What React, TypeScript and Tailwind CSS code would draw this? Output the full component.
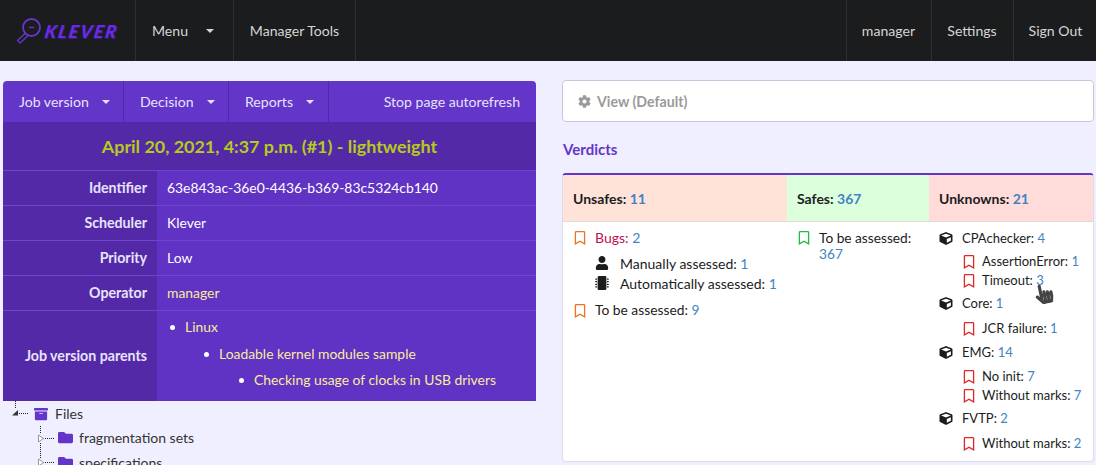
import { FaArchive, FaCog, FaCube, FaFolder, FaHandPointer, FaMicrochip, FaRegBookmark, FaUser } from 'react-icons/fa';

const Caret = ({ className = 'ml-[13px]' }: { className?: string }) => (
  <span className={`${className} inline-block w-0 h-0 border-x-[4px] border-x-transparent border-t-[4px] border-t-current`} />
);

const Num = ({ children }: { children: React.ReactNode }) => (
  <span className="text-[#4183c4]">{children}</span>
);

const Mark = ({ color }: { color: string }) => (
  <span className={`w-[14px] shrink-0 flex justify-start ${color}`}>
    <FaRegBookmark size={14} />
  </span>
);

const InfoRow = ({ label, children, h = 'h-[35px]' }: { label: string; children: React.ReactNode; h?: string }) => (
  <div className={`flex ${h} border-b border-b-[#6f45cc] last:border-b-0`}>
    <div className="w-[154px] shrink-0 bg-[#5429a8] flex items-center justify-end pr-[10px] font-bold text-[#e6e3fb] text-[14.2px]">
      {label}
    </div>
    <div className="flex-1 flex items-center pl-[10px] text-[13.9px] text-white">{children}</div>
  </div>
);

const Sub = ({ children }: { children: React.ReactNode }) => (
  <div className="flex items-center h-[19px] pl-[23px]">
    <Mark color="text-[#db2828]" />
    <span className="ml-[6px]">{children}</span>
  </div>
);

const Comp = ({ name, n }: { name: string; n: number }) => (
  <div className="flex items-center h-[19px]">
    <FaCube size={13} className="text-[#1b1c1d] w-[14px] shrink-0" />
    <span className="ml-[9px]">
      {name}: <Num>{n}</Num>
    </span>
  </div>
);

const Parent = ({ pad, children }: { pad: string; children: React.ReactNode }) => (
  <li className={`flex items-center h-[26.5px] ${pad}`}>
    <span className="w-[5px] h-[5px] rounded-full bg-white mr-[10px]" />
    {children}
  </li>
);

const App = () => {
  return (
    <div className="h-[465px] w-[1096px] overflow-hidden bg-[#f0efff] font-['Lato','Liberation_Sans',sans-serif] text-[14px] text-[#1b1c1d]">
      <header className="h-[61px] flex bg-[#1b1c1d] text-[#d5d5d6] text-[14.1px]">
        <div className="w-[136px] flex items-center pl-[16px] border-r border-r-[#2f3031]">
          <svg width="26" height="28" viewBox="0 0 26 28" fill="none" className="shrink-0">
            <circle cx="15.500" cy="10.500" r="8.500" stroke="#6435c9" strokeWidth="1.800" />
            <path d="M13 10.500h5" stroke="#6435c9" strokeWidth="1.400" />
            <path d="M9.500 16 1.500 23.500l2.500 2.500 8-7.500" stroke="#6435c9" strokeWidth="1.400" strokeLinejoin="round" />
          </svg>
          <span className="ml-[3px] inline-block -skew-x-[10deg] text-[#6a2be2] italic font-black text-[18px] tracking-[1.800px] leading-none [text-shadow:1px_1px_0_#3a1a80]">
            KLEVER
          </span>
        </div>
        <div className="w-[98px] flex items-center pl-[16px] border-r border-r-[#2f3031]">
          Menu
          <Caret className="ml-[18px]" />
        </div>
        <div className="w-[122px] flex items-center justify-center border-r border-r-[#2f3031]">Manager Tools</div>
        <div className="flex-1" />
        <div className="w-[85px] flex items-center justify-center pr-px border-l border-l-[#2f3031]">manager</div>
        <div className="w-[82px] flex items-center justify-center pr-px border-l border-l-[#2f3031]">Settings</div>
        <div className="w-[83px] flex items-center justify-center pl-px border-l border-l-[#2f3031]">Sign Out</div>
      </header>

      <main className="flex pt-[20px] pl-[3px]">
        <section className="w-[533px] shrink-0">
          <div className="rounded-t-[4px] bg-[#6435c9] text-[#e6e3fb] h-[41px] flex text-[14.1px]">
            <div className="w-[121px] flex items-center pl-[16px] border-r border-r-[#5429a8]">
              Job version
              <Caret />
            </div>
            <div className="w-[105px] flex items-center pl-[16px] border-r border-r-[#5429a8]">
              Decision
              <Caret />
            </div>
            <div className="w-[100px] flex items-center pl-[16px] border-r border-r-[#5429a8]">
              Reports
              <Caret />
            </div>
            <div className="flex-1 flex items-center justify-end pr-[16px]">Stop page autorefresh</div>
          </div>
          <div className="h-[49px] bg-[#5429a8] flex items-center justify-center font-bold text-[17.9px] text-[#b5cc18] border-b border-b-[#6f45cc]">
            April 20, 2021, 4:37 p.m. (#1) - lightweight
          </div>
          <div className="bg-[#6033c4]">
            <InfoRow label="Identifier">63e843ac-36e0-4436-b369-83c5324cb140</InfoRow>
            <InfoRow label="Scheduler">Klever</InfoRow>
            <InfoRow label="Priority">Low</InfoRow>
            <InfoRow label="Operator">
              <span className="text-[#fbeb9a]">manager</span>
            </InfoRow>
            <InfoRow label="Job version parents" h="h-[90px]">
              <ul className="text-[#fbeb9a] -mt-[4px]">
                <Parent pad="pl-[3px]">Linux</Parent>
                <Parent pad="pl-[37px]">Loadable kernel modules sample</Parent>
                <Parent pad="pl-[72px]">Checking usage of clocks in USB drivers</Parent>
              </ul>
            </InfoRow>
          </div>
          <div className="text-[#333]">
            <div className="flex items-center h-[25px] pl-[6px]">
              <svg width="24" height="25" viewBox="0 0 24 25" className="shrink-0">
                <path d="M6.500 0v8M8 12.500h11" stroke="#222" strokeDasharray="1 1" />
                <path d="M3 14.500h6V9z" fill="#333" />
              </svg>
              <FaArchive size={14} className="text-[#6435c9] ml-[1px]" />
              <span className="ml-[7px]">Files</span>
            </div>
            <div className="flex items-center h-[23px] pl-[31px]">
              <svg width="22" height="23" viewBox="0 0 22 23" className="shrink-0">
                <path d="M6.500 0v8M9 12.500h12M6.500 17v6" stroke="#222" strokeDasharray="1 1" />
                <path d="M4.500 9v7l5-3.500z" fill="#fff" stroke="#999" />
              </svg>
              <FaFolder size={15} className="text-[#6435c9] ml-[2px]" />
              <span className="ml-[6px]">fragmentation sets</span>
            </div>
            <div className="flex items-center h-[26px] pl-[31px]">
              <svg width="22" height="26" viewBox="0 0 22 26" className="shrink-0">
                <path d="M6.500 0v9M9 13.500h12" stroke="#222" strokeDasharray="1 1" />
                <path d="M4.500 10v7l5-3.500z" fill="#fff" stroke="#999" />
              </svg>
              <FaFolder size={15} className="text-[#6435c9] ml-[2px]" />
              <span className="ml-[6px]">specifications</span>
            </div>
          </div>
        </section>

        <section className="w-[532px] ml-[26px] shrink-0">
          <div className="h-[42px] -mt-px bg-white rounded-[4px] border border-[#c9c6d8] flex items-center pl-[15px] pt-px font-bold text-[#9a9a9a]">
            <FaCog size={13} />
            <span className="ml-[6px] text-[14.2px]">View (Default)</span>
          </div>
          <h3 className="mt-[18px] pl-px font-bold text-[15px] leading-[18px] text-[#6435c9]">Verdicts</h3>
          <div className="relative mt-[15px] h-[289px] bg-white rounded-[4px] border border-[#dcdbe8] border-t-2 border-t-[#6435c9] overflow-hidden flex flex-col">
            <div className="flex h-[47px] font-bold border-b border-b-[#e5d9d5] shrink-0">
              <div className="w-[224px] bg-[#ffe3d9] flex items-center pl-[10px]">
                Unsafes:&nbsp;<Num>11</Num>
              </div>
              <div className="w-[142px] bg-[#dcffdc] flex items-center pl-[10px]">
                Safes:&nbsp;<Num>367</Num>
              </div>
              <div className="flex-1 bg-[#ffdbd9] flex items-center pl-[10px]">
                Unknowns:&nbsp;<Num>21</Num>
              </div>
            </div>
            <div className="flex flex-1">
              <div className="w-[224px] pl-[10px] pt-[6px]">
                <div className="flex items-center h-[19px]">
                  <Mark color="text-[#f2711c]" />
                  <span className="ml-[8px] text-[#c00f55]">
                    Bugs: <Num>2</Num>
                  </span>
                </div>
                <div className="flex items-center h-[20px] mt-[6px] pl-[21px]">
                  <FaUser size={14} className="text-[#1b1c1d] w-[16px]" />
                  <span className="ml-[10px]">
                    Manually assessed: <Num>1</Num>
                  </span>
                </div>
                <div className="flex items-center h-[20px] pl-[21px]">
                  <FaMicrochip size={14} className="text-[#1b1c1d] w-[16px]" />
                  <span className="ml-[10px]">
                    Automatically assessed: <Num>1</Num>
                  </span>
                </div>
                <div className="flex items-center h-[19px] mt-[8px]">
                  <Mark color="text-[#f2711c]" />
                  <span className="ml-[8px] text-[13.8px]">
                    To be assessed: <Num>9</Num>
                  </span>
                </div>
              </div>
              <div className="w-[142px] pl-[10px] pt-[7px] flex items-start">
                <div className="mt-[2px]">
                  <Mark color="text-[#21ba45]" />
                </div>
                <span className="ml-[8px] w-[100px] leading-[16px] pt-[1px] text-[13.7px]">
                  To be assessed: <Num>367</Num>
                </span>
              </div>
              <div className="flex-1 pl-[10px] pt-[7px] relative text-[13px]">
                <Comp name="CPAchecker" n={4} />
                <div className="h-[4px]" />
                <Sub>
                  AssertionError: <Num>1</Num>
                </Sub>
                <Sub>
                  Timeout: <Num>3</Num>
                </Sub>
                <div className="h-[4px]" />
                <Comp name="Core" n={1} />
                <div className="h-[6px]" />
                <Sub>
                  JCR failure: <Num>1</Num>
                </Sub>
                <div className="h-[5px]" />
                <Comp name="EMG" n={14} />
                <div className="h-[5px]" />
                <Sub>
                  No init: <Num>7</Num>
                </Sub>
                <Sub>
                  Without marks: <Num>7</Num>
                </Sub>
                <div className="h-[4px]" />
                <Comp name="FVTP" n={2} />
                <div className="h-[6px]" />
                <Sub>
                  Without marks: <Num>2</Num>
                </Sub>
                <FaHandPointer size={20} className="absolute left-[105px] top-[62px] text-[#444] -rotate-12" />
              </div>
            </div>
          </div>
        </section>
      </main>
    </div>
  );
};

export default App;
